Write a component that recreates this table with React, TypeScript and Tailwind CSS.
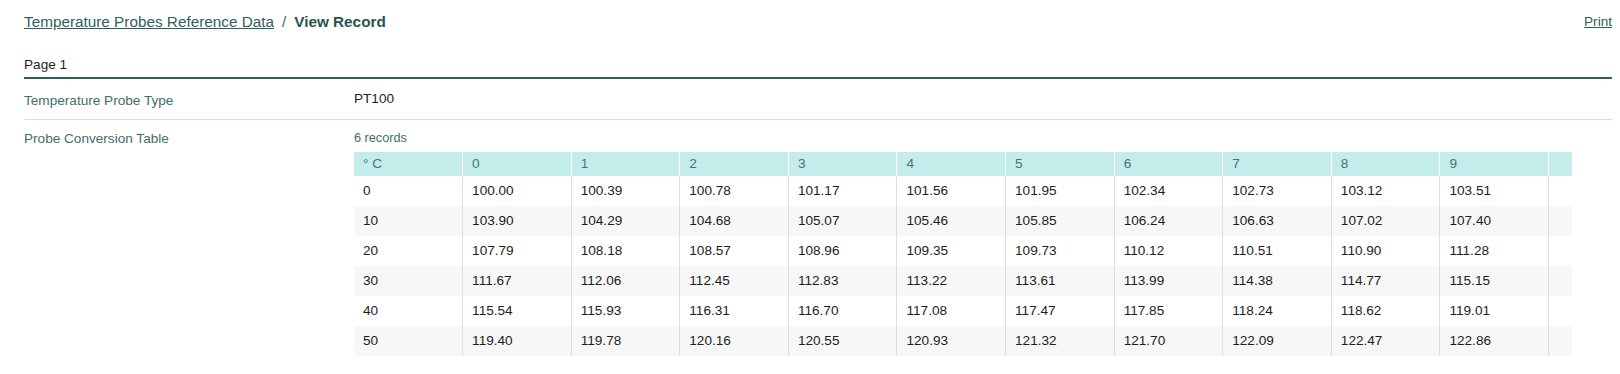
const headers = ["° C", "0", "1", "2", "3", "4", "5", "6", "7", "8", "9"];

const rows: [string, string[]][] = [
  ["0", ["100.00", "100.39", "100.78", "101.17", "101.56", "101.95", "102.34", "102.73", "103.12", "103.51"]],
  ["10", ["103.90", "104.29", "104.68", "105.07", "105.46", "105.85", "106.24", "106.63", "107.02", "107.40"]],
  ["20", ["107.79", "108.18", "108.57", "108.96", "109.35", "109.73", "110.12", "110.51", "110.90", "111.28"]],
  ["30", ["111.67", "112.06", "112.45", "112.83", "113.22", "113.61", "113.99", "114.38", "114.77", "115.15"]],
  ["40", ["115.54", "115.93", "116.31", "116.70", "117.08", "117.47", "117.85", "118.24", "118.62", "119.01"]],
  ["50", ["119.40", "119.78", "120.16", "120.55", "120.93", "121.32", "121.70", "122.09", "122.47", "122.86"]],
];

const ConversionTable = () => (
  <table className="table-fixed border-collapse w-[1218px] text-[13.6px]">
    <colgroup>
      {headers.map((h) => (
        <col key={h} className="w-[108.6px]" />
      ))}
      <col className="w-[23.4px]" />
    </colgroup>
    <thead>
      <tr className="bg-[#c4ecea] text-[#3b7a75] h-[24px]">
        {headers.map((h, i) => (
          <th
            key={h}
            className={`text-left font-normal px-[9px] py-0 leading-[24px] ${i > 0 ? "border-l border-white" : ""}`}
          >
            {h}
          </th>
        ))}
        <th className="border-l border-white" />
      </tr>
    </thead>
    <tbody>
      {rows.map(([deg, vals], r) => (
        <tr key={deg} className={`h-[30px] text-[#1e1e1e] ${r % 2 === 1 ? "bg-[#f7f7f7]" : "bg-white"}`}>
          <td className="px-[9px] py-0 leading-[30px]">{deg}</td>
          {vals.map((v, i) => (
            <td key={i} className="border-l border-[#dddddd] px-[9px] py-0 leading-[30px]">
              {v}
            </td>
          ))}
          <td className="border-l border-[#dddddd]" />
        </tr>
      ))}
    </tbody>
  </table>
);

export default function App() {
  return (
    <div className="min-h-[374px] bg-white pl-[24px] pr-[8px] font-['Liberation_Sans',Arial,sans-serif]">
      {/* title bar */}
      <div className="flex items-start justify-between pt-[12px]">
        <div className="text-[15.3px] leading-[20px] text-[#2f5f5b]">
          <a href="#" className="underline">
            Temperature Probes Reference Data
          </a>
          <span className="mx-[8px] text-[#4d6664]">/</span>
          <span className="font-bold text-[#1f5652]">View Record</span>
        </div>
        <a href="#" className="text-[13.6px] leading-[20px] text-[#2f5f5b] underline">
          Print
        </a>
      </div>

      {/* page section */}
      <div className="mt-[23px] border-b-2 border-[#2c5f5b] pb-[2px] text-[13.6px] leading-[20px] text-[#1e1e1e]">
        Page 1
      </div>

      <div className="flex items-start border-b border-[#cfe2e2] pt-[10px] pb-[8px] text-[13.6px] leading-[20px]">
        <div className="w-[330px] shrink-0 pt-[2px] text-[#436e6b]">Temperature Probe Type</div>
        <div className="text-[#1e1e1e]">PT100</div>
      </div>

      <div className="flex pt-[9px] text-[13.6px] leading-[20px]">
        <div className="w-[330px] shrink-0 text-[#436e6b]">Probe Conversion Table</div>
        <div>
          <div className="mb-[5px] text-[12.7px] leading-[18px] text-[#436e6b]">6 records</div>
          <ConversionTable />
        </div>
      </div>
    </div>
  );
}
